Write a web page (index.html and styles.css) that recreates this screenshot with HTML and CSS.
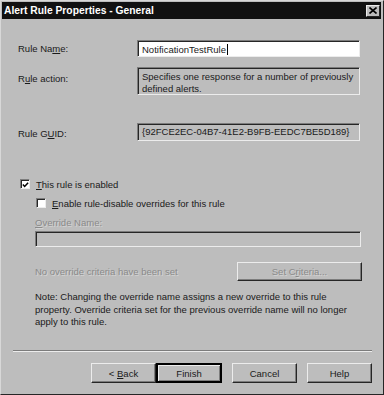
FILE: index.html
```html
<!DOCTYPE html>
<html lang="en">
<head>
<meta charset="UTF-8">
<title>Alert Rule Properties - General</title>
<link rel="stylesheet" href="styles.css">
</head>
<body>
<div class="window">
  <div class="titlebar">
    <span class="title">Alert Rule Properties - General</span>
    <span class="close"><svg width="8" height="7" viewBox="0 0 8 7"><path d="M0.5 0.5 L7.5 6.5 M7.5 0.5 L0.5 6.5" stroke="#000" stroke-width="1.6"/></svg></span>
  </div>

  <div class="content">
    <!-- Rule properties -->
    <div class="row name">
      <label>Rule Na<u>m</u>e:</label>
      <div class="edit">NotificationTestRule<span class="caret"></span></div>
    </div>
    <div class="row action">
      <label>R<u>u</u>le action:</label>
      <div class="static">Specifies one response for a number of previously defined alerts.</div>
    </div>
    <div class="row guid">
      <label>Rule G<u>U</u>ID:</label>
      <div class="static">{92FCE2EC-04B7-41E2-B9FB-EEDC7BE5D189}</div>
    </div>

    <!-- Enable / overrides -->
    <div class="check first">
      <span class="box"><svg width="8" height="8" viewBox="0 0 8 8"><path d="M1 3.5 L3 5.7 L7 1.3" fill="none" stroke="#000" stroke-width="1.7"/></svg></span>
      <span><u>T</u>his rule is enabled</span>
    </div>
    <div class="check sub">
      <span class="box"></span>
      <span><u>E</u>nable rule-disable overrides for this rule</span>
    </div>

    <div class="override">
      <div class="disabled"><u>O</u>verride Name:</div>
      <div class="edit off"></div>
    </div>

    <div class="criteria">
      <span class="disabled">No override criteria have been set</span>
      <span class="btn wide disabled"><span>Set C<u>r</u>iteria...</span></span>
    </div>

    <p class="note">Note: Changing the override name assigns a new override to this rule property. Override criteria set for the previous override name will no longer apply to this rule.</p>
  </div>

  <div class="footer">
    <div class="sep"></div>
    <div class="btn-row">
      <span class="btn"><span>&lt; <u>B</u>ack</span></span>
      <span class="btn default">Finish</span>
      <span class="btn gap">Cancel</span>
      <span class="btn gap">Help</span>
    </div>
  </div>
</div>
</body>
</html>
```

FILE: styles.css
```css
:root { --face:#bdbdbd; --light:#ececec; --shadow:#7c7c7c; --dark:#262626; --text:#1a1a1a; --grey:#8a8a8a; }
body{margin:0;background:var(--face);font-family:"Liberation Sans",Arial,sans-serif;font-size:9.5px;line-height:11px;color:var(--text);}
u{text-decoration:underline;text-underline-offset:1px;}
.window{width:384px;height:395px;box-sizing:border-box;display:flex;flex-direction:column;background:var(--face);
  border:1px solid;border-color:#d8d8d8 var(--dark) var(--dark) #d8d8d8;padding:1px 2px 2px 1px;}

/* Title bar */
.titlebar{height:17px;flex:0 0 17px;background:#111;color:#fff;display:flex;align-items:center;justify-content:space-between;padding:0 1px 0 2px;}
.title{font-weight:bold;font-size:10.3px;}
.close{width:12px;height:10px;background:var(--face);border:1px solid;border-color:var(--light) var(--dark) var(--dark) var(--light);display:flex;align-items:center;justify-content:center;}

/* Content */
.content{padding:0 0 0 16px;}
.row{display:flex;align-items:flex-start;}
.row label{flex:0 0 119px;}
.row.name{margin-top:21px;align-items:center;}
.row.action{margin-top:10px;}
.row.action label{padding-top:6px;}
.row.guid{margin-top:28px;align-items:center;}
.row.guid label{padding-top:2px;}

.edit,.static{width:223px;box-sizing:border-box;border:1px solid;border-color:var(--shadow) var(--light) var(--light) var(--shadow);box-shadow:inset 1px 1px 0 var(--dark);}
.edit{height:17px;background:#fff;padding:1px 4px 0;display:flex;align-items:center;}
.caret{display:inline-block;width:1px;height:11px;background:#000;margin-left:1px;}
.static{padding:3px 3px 2px 4px;line-height:11.7px;}
.row.action .static{height:28px;}
.row.guid .static{height:18px;padding-top:2px;}

.check{display:flex;align-items:center;gap:6px;height:14px;}
.check.first{margin-top:36px;margin-left:2px;}
.check.sub{margin-top:5px;margin-left:18px;}
.box{width:10px;height:10px;box-sizing:border-box;background:#fff;border:1px solid;border-color:var(--shadow) var(--light) var(--light) var(--shadow);box-shadow:inset 1px 1px 0 var(--dark);display:flex;align-items:center;justify-content:center;}
.box svg{margin:1px 0 0 1px;}

.disabled{color:var(--grey);text-shadow:1px 1px 0 #d4d4d4;}
.override{margin:7px 0 0 17px;}
.override .edit.off{width:326px;height:16px;margin-top:3px;background:var(--face);}

.criteria{display:flex;align-items:center;justify-content:space-between;margin:15px 0 0 17px;width:327px;}
.note{margin:10px 0 0 17px;line-height:12.5px;width:324px;}

/* Buttons */
.btn{display:flex;align-items:center;justify-content:center;box-sizing:border-box;width:65px;height:20px;background:var(--face);
  border:1px solid;border-color:var(--light) var(--dark) var(--dark) var(--light);box-shadow:inset -1px -1px 0 var(--shadow);}
.btn.wide{width:125px;height:19px;}
.btn.default{width:66px;border:2px solid #000;box-shadow:inset 1px 1px 0 var(--light),inset -1px -1px 0 var(--shadow);}
.btn.gap{margin-left:10px;}

.footer{margin-top:auto;padding:0 9px 9px 11px;}
.sep{height:0;border-top:1px solid var(--shadow);border-bottom:1px solid var(--light);}
.btn-row{display:flex;justify-content:flex-end;margin-top:11px;}
```
